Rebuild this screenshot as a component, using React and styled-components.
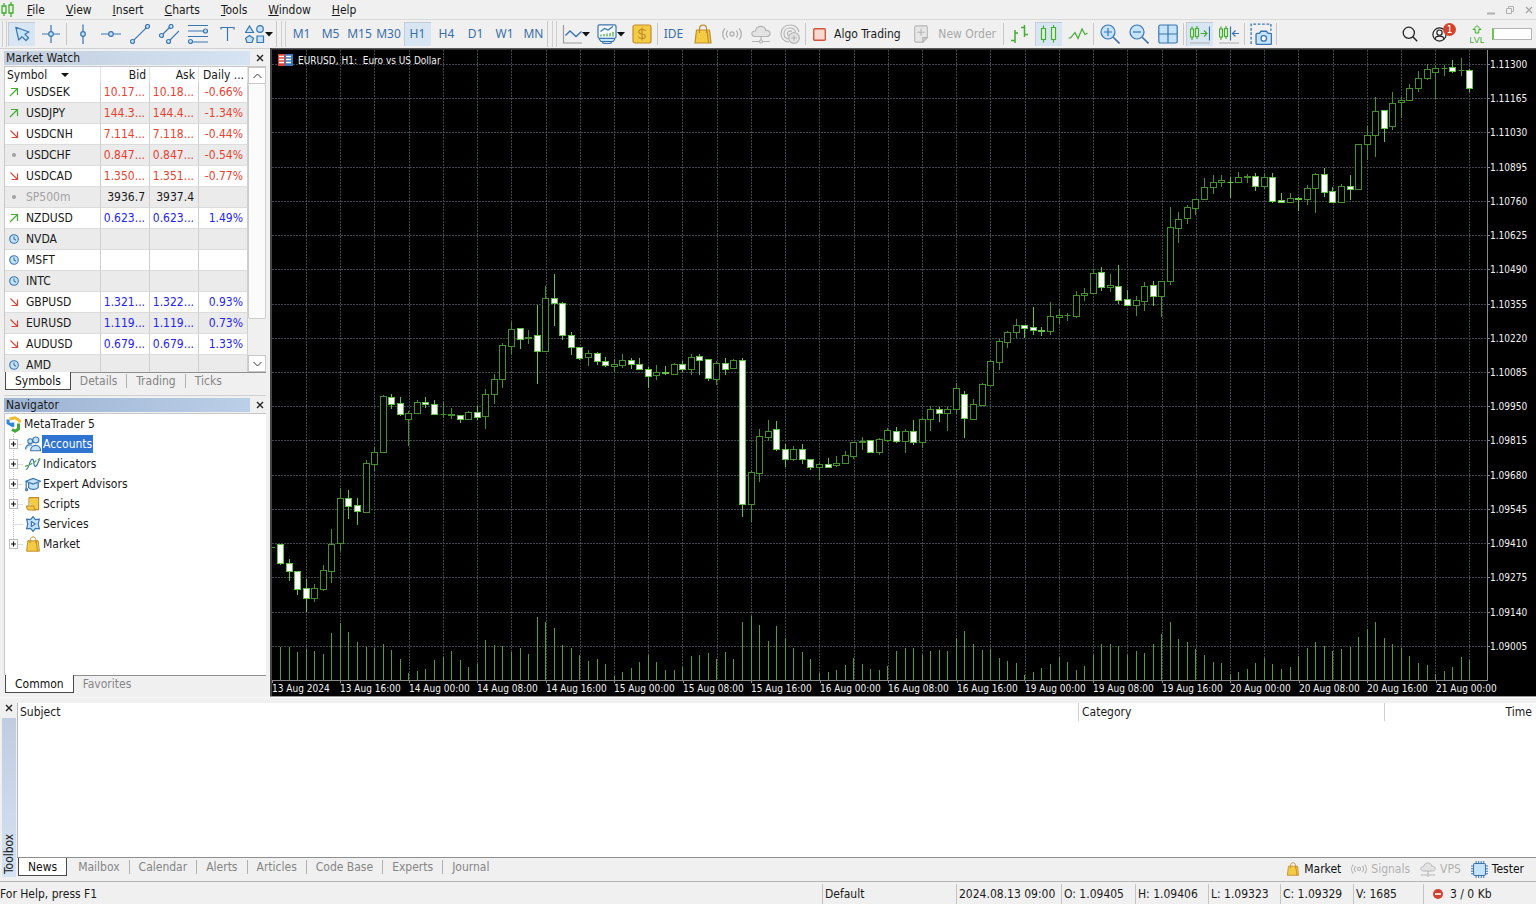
import React from 'react';
import styled, { createGlobalStyle } from 'styled-components';

const UI_FONT = '"DejaVu Sans Condensed", "Noto Sans", sans-serif';
const BLUE = '#3a75b0';
const SKY = '#c5e3fb';
const GREEN = '#45ab33';
const GOLD = '#c08d2c';
const YELLOW = '#f3cb45';
const GRAY = '#b4b4b4';

const GlobalStyle = createGlobalStyle`
  * { box-sizing: border-box; }
  body {
    margin: 0;
    background: #f0f0f0;
    color: #1a1a1a;
    font: 11px/14px ${UI_FONT};
  }
  button {
    padding: 0;
    border: 0;
    background: none;
    color: inherit;
    font: inherit;
    white-space: nowrap;
  }
  svg { display: block; flex: none; }
`;

const Window = styled.div`
  display: flex;
  flex-direction: column;
  height: 100vh;
  overflow: hidden;
`;

/* ---------- menu ---------- */

const MenuBar = styled.nav`
  display: flex;
  align-items: center;
  height: 20px;
  flex: none;
  padding: 0 2px 0 1px;
  border-bottom: 1px solid #d9d9d9;
`;

const MenuItems = styled.div`
  display: flex;
  flex: 1;
  gap: 21px;
  padding-left: 12px;
`;

const MenuItem = styled.button`
  font-size: 12px;
  &::first-letter { text-decoration: underline; }
`;

const WindowButtons = styled.div`
  display: flex;
  gap: 9px;
`;

/* ---------- toolbar ---------- */

const ToolBar = styled.div`
  display: flex;
  align-items: center;
  height: 28px;
  flex: none;
  padding-right: 4px;
`;

const ToolGroup = styled.div`
  display: flex;
  justify-content: space-between;
  flex: none;
  width: ${p => p.$width}px;
`;

const ToolButton = styled.button`
  display: flex;
  align-items: center;
  justify-content: ${p => (p.$menu ? 'flex-start' : 'center')};
  width: ${p => (p.$menu ? 34 : 27)}px;
  height: 24px;
  padding-left: ${p => (p.$menu ? 3 : 0)}px;
  background: ${p => (p.$active ? '#d8e5f2' : 'none')};
  box-shadow: ${p => (p.$active ? 'inset 1px 1px 0 #c3ccd6' : 'none')};
  color: #3a6ea8;
  font: 12px/16px "Noto Sans", sans-serif;
`;

const LabelButton = styled.button`
  display: flex;
  align-items: center;
  gap: 8px;
  height: 24px;
  padding: 0 5px;
  font-size: 12px;
  color: ${p => (p.disabled ? '#a8a8a8' : '#1a1a1a')};
`;

const Separator = styled.div`
  flex: none;
  width: 1px;
  height: 22px;
  margin: 0 2px;
  background: #c8c8c8;
`;

const Grip = styled.div`
  flex: none;
  width: ${p => (p.$first ? 8 : 12)}px;
  height: 26px;
  padding-left: ${p => (p.$first ? 2 : 4)}px;
  border-left: ${p => (p.$first ? 0 : 1)}px solid #c8c8c8;
  &::before {
    content: '';
    display: block;
    width: 3px;
    height: 26px;
    border: solid #cfcfcf;
    border-width: 0 1px;
  }
`;

const ToolBarRight = styled.div`
  display: flex;
  align-items: center;
  gap: 14px;
  margin-left: auto;
`;

const AccountButton = styled.button`
  position: relative;
  width: 24px;
`;

const Badge = styled.span`
  position: absolute;
  top: -4px;
  right: 0;
  width: 13px;
  height: 13px;
  border-radius: 50%;
  background: #d0442c;
  color: #fff;
  font-size: 10px;
  line-height: 13px;
`;

const Level = styled.div`
  display: flex;
  align-items: center;
  gap: 8px;
`;

const LevelMeter = styled.div`
  width: 40px;
  height: 12px;
  border: 1px solid #b5b5b5;
  border-left: 2px solid #6cc653;
  background: #fff;
`;

/* ---------- panels ---------- */

const Workspace = styled.main`
  display: flex;
  flex: 1;
  min-height: 0;
`;

const SideBar = styled.aside`
  display: flex;
  flex-direction: column;
  flex: none;
  width: 270px;
  padding: 0 4px;
  border-top: 1px solid #d0d0d0;
`;

const Panel = styled.section`
  display: flex;
  flex-direction: column;
  flex: ${p => (p.$grow ? '1' : 'none')};
  min-height: 0;
  padding-bottom: ${p => (p.$grow ? 4 : 5)}px;
  border-bottom: ${p => (p.$grow ? 0 : 1)}px solid #d0d0d0;
`;

const PanelHeader = styled.header`
  display: flex;
  align-items: center;
  justify-content: space-between;
  height: 17px;
  padding-right: 1px;
`;

const PanelTitle = styled.h2`
  margin: 0;
  width: 246px;
  padding-left: 2px;
  background: linear-gradient(90deg, ${p => (p.$focused ? '#9bb2d1, #bccfe8' : '#c2cede, #d5e3f2')});
  font-size: 12px;
  font-weight: normal;
  line-height: 14px;
`;

const CloseButton = styled.button`
  width: 10px;
  height: 10px;
`;

const WatchBody = styled.div`
  display: flex;
  height: 306px;
  overflow: hidden;
  border: solid #c8c8c8;
  border-width: 1px 0 0 1px;
  background: #fff;
`;

const WatchTable = styled.table`
  flex: 1;
  align-self: flex-start;
  width: 100%;
  border-collapse: separate;
  border-spacing: 0;
  table-layout: fixed;
  font-size: 12px;
  line-height: 14px;
  th {
    height: 15px;
    padding: 0 3px;
    border-right: 1px solid #e2e2e2;
    font-weight: normal;
    text-align: right;
    white-space: nowrap;
  }
  th:first-child { width: 96px; text-align: left; padding-left: 2px; }
  th:nth-child(2), th:nth-child(3) { width: 49px; }
  td {
    height: 21px;
    padding: 0 4px 0 2px;
    border-right: 1px solid #cfcfcf;
    border-bottom: 1px solid #dcdcdc;
    text-align: right;
    white-space: nowrap;
  }
  td:first-child { padding-left: 4px; }
`;

const WatchRow = styled.tr`
  background: ${p => (p.$odd ? '#ebebeb' : '#fff')};
  color: ${p => p.$tone};
`;

const SymbolCell = styled.div`
  display: flex;
  align-items: center;
  gap: 7px;
  color: ${p => (p.$muted ? '#a3a3a3' : '#1a1a1a')};
`;

const SortMark = styled.span`
  display: inline-block;
  margin-left: 10px;
  vertical-align: 2px;
  border: solid transparent;
  border-width: 4px 4px 0;
  border-top-color: #111;
`;

const ScrollBar = styled.div`
  display: flex;
  flex: none;
  flex-direction: column;
  width: 18px;
  background: #f0f0f0;
`;

const ScrollButton = styled.button`
  display: flex;
  align-items: center;
  justify-content: center;
  height: 17px;
  border: 1px solid #c8c8c8;
  background: #fff;
`;

const ScrollThumb = styled.div`
  height: 235px;
  margin-bottom: auto;
  border: solid #cdcdcd;
  border-width: 0 1px 1px;
  border-radius: 2px;
  background: #fbfbfb;
`;

const Tabs = styled.div`
  display: flex;
  align-items: flex-start;
  height: ${p => (p.$tall ? 24 : 18)}px;
  padding-left: 1px;
  border-top: ${p => (p.$tall ? 1 : 0)}px solid #8f8f8f;
`;

const TabSpace = styled.div`
  flex: 1;
  display: flex;
  padding: ${p => (p.$line ? '1px 0 0' : '2px 0 0 2px')};
  border-top: ${p => (p.$line ? 1 : 0)}px solid #8f8f8f;
`;

const Tab = styled.button`
  height: ${p => (p.$active ? 18 : 14)}px;
  padding: 0 9px;
  border: solid ${p => (p.$active ? '#4a4a4a' : '#b0b0b0')};
  border-width: ${p => (p.$active ? '0 1px 1px' : '0 1px 0 0')};
  background: ${p => (p.$active ? '#fff' : 'none')};
  color: ${p => (p.$active ? '#111' : '#858585')};
  font-size: 12px;
  &:last-child { border-right-width: ${p => (p.$active ? 1 : 0)}px; }
`;

const Tree = styled.ul`
  flex: 1;
  margin: 0;
  padding: 0;
  border: solid #c8c8c8;
  border-width: 1px 0 0 1px;
  background: #fff;
  list-style: none;
  font-size: 12px;
`;

const TreeRow = styled.li`
  display: flex;
  align-items: center;
  gap: 1px;
  height: 20px;
  padding-left: ${p => (p.$root ? 1 : 3)}px;
`;

const TreeLabel = styled.span`
  padding: 2px 1px;
  background: ${p => (p.$selected ? '#2f74d0' : 'none')};
  color: ${p => (p.$selected ? '#fff' : 'inherit')};
`;

const ChartArea = styled.section`
  flex: 1;
  min-width: 0;
  background: #000;
  svg { width: 100%; height: 100%; }
`;

/* ---------- toolbox ---------- */

const ToolBox = styled.section`
  display: flex;
  flex: none;
  height: 184px;
  padding-top: 5px;
  border-top: 1px solid #fafafa;
`;

const ToolBoxRail = styled.div`
  display: flex;
  flex-direction: column;
  align-items: center;
  width: 17px;
  padding-bottom: 4px;
`;

const ToolBoxTitle = styled.h2`
  flex: 1;
  width: 14px;
  margin: 5px 0 0;
  padding-top: 3px;
  background: linear-gradient(0deg, #c0cce0, #d5e3f2);
  font-size: 12px;
  font-weight: normal;
  line-height: 14px;
  writing-mode: vertical-rl;
  transform: rotate(180deg);
`;

const ToolBoxBody = styled.div`
  display: flex;
  flex-direction: column;
  flex: 1;
`;

const NewsPane = styled.div`
  flex: 1;
  border-left: 1px solid #b8b8b8;
  background: #fff;
`;

const NewsTable = styled.table`
  width: 100%;
  border-spacing: 0;
  table-layout: fixed;
  font-size: 12px;
  th {
    height: 18px;
    padding: 0 4px 0 3px;
    border-left: 1px solid #d0d0d0;
    font-weight: normal;
    text-align: left;
  }
  th:first-child { padding-left: 2px; border: 0; }
  th:nth-child(2) { width: 306px; }
  th:last-child { width: 152px; text-align: right; }
`;

const Services = styled.div`
  display: flex;
  gap: 10px;
  margin-left: auto;
  padding-right: 12px;
`;

const Service = styled.button`
  display: flex;
  align-items: center;
  gap: 4px;
  height: 22px;
  color: ${p => (p.disabled ? '#b0b0b0' : '#111')};
  font-size: 12px;
`;

const StatusBar = styled.footer`
  display: flex;
  align-items: center;
  flex: none;
  height: 23px;
  padding-top: 2px;
  border-top: 1px solid #b5b5b5;
  font-size: 12px;
`;

const StatusCell = styled.div`
  display: flex;
  align-items: center;
  gap: 7px;
  flex: ${p => (p.$width ? 'none' : '1')};
  width: ${p => (p.$width ? `${p.$width}px` : 'auto')};
  height: 20px;
  padding-left: ${p => (p.$width ? 2 : 0)}px;
  border-left: ${p => (p.$width ? 1 : 0)}px solid #c4c4c4;
  white-space: nowrap;
`;

/* ---------- icons ---------- */

const Icon = ({ size = 20, color = BLUE, children, ...rest }) => (
  <svg width={size} height={size} viewBox="0 0 20 20" fill="none" stroke={color} strokeWidth="1.2" aria-hidden="true" {...rest}>
    {children}
  </svg>
);

const Caret = () => (
  <svg width="8" height="5" viewBox="0 0 8 5" aria-hidden="true"><path d="M0 0h8L4 4.5z" fill="#111" /></svg>
);

const Cross = ({ color = '#222' }) => (
  <svg width="10" height="10" viewBox="0 0 10 10" stroke={color} strokeWidth="1.4" aria-hidden="true"><path d="M2 2l6 6M8 2l-6 6" /></svg>
);

const Logo = () => (
  <svg width="14" height="18" viewBox="0 0 14 18" fill="none" stroke={GREEN} strokeWidth="1.3" aria-hidden="true">
    <path d="M1 5h4v7H1zM3 2v3M3 12v3M8 4h4v8H8zM10 1v3M10 12v4" fill="#e5f7df" />
  </svg>
);

const CursorIcon = () => <Icon><path d="M3.8 3.2l2.900 12.800 3.300-3.200 4 3.700 2.600-2.500-3.800-3.800 4.200-2.200z" fill={SKY} strokeLinejoin="round" /></Icon>;
const CrosshairIcon = () => <Icon><path d="M10 1v6.5M10 12.500V19M1 10h6.500M12.500 10H19" /><circle cx="10" cy="10" r="2.300" fill={SKY} /></Icon>;
const VLineIcon = () => <Icon><path d="M10 0.500v7M10 12.500V20" /><circle cx="10" cy="10" r="2.300" fill={SKY} /></Icon>;
const HLineIcon = () => <Icon><path d="M0 10h7.500M12.500 10H20" /><circle cx="10" cy="10" r="2.300" fill={SKY} /></Icon>;
const TrendIcon = () => <Icon><path d="M3.800 16.200L16.200 3.800" /><circle cx="2.500" cy="17.500" r="2" fill={SKY} /><circle cx="17.500" cy="2.500" r="2" fill={SKY} /></Icon>;
const ChannelIcon = () => (
  <Icon>
    <path d="M3.500 10.500l7.500-7.500M10.500 16.500L20 7" />
    <circle cx="2.500" cy="11.500" r="2" fill={SKY} /><circle cx="12" cy="2.500" r="2" fill={SKY} /><circle cx="9.500" cy="17.500" r="2" fill={SKY} />
  </Icon>
);
const FiboIcon = () => (
  <Icon>
    <path d="M0 1.500h20M0 7h15M0 12.500h20M5 18h15" />
    <circle cx="17.500" cy="7" r="2" fill={SKY} /><circle cx="2.500" cy="17.500" r="2" fill={SKY} />
  </Icon>
);
const TextIcon = () => <Icon><path d="M4 5.500V3.500h13v2M10.500 3.500V17" /></Icon>;
const ShapesIcon = () => (
  <Icon fill={SKY}>
    <path d="M4.500 2l4 6.500h-8zM4.500 11.500l4 2.800-1.500 4.200H2L.5 14.300z" />
    <circle cx="15" cy="5" r="3.300" /><path d="M12 12h6.500v6.500H12z" />
  </Icon>
);
const LineChartIcon = () => <Icon><path d="M1.500 1v18H20" stroke="#9c9c9c" /><path d="M3.500 11.500L8 7l6 5.500 5.500-5" strokeWidth="1.400" /></Icon>;
const IndicatorsIcon = () => (
  <Icon>
    <rect x="1" y="0.800" width="18" height="13.500" rx="1.500" fill="#f4faff" />
    <path d="M2 15l2 2.500h12l2-2.500M5 18.500c2 1.300 8 1.300 10 0" fill={SKY} />
    <path d="M3.500 7.500l4-3 3.500 1.500 5-3.500" />
    <path d="M4 12.500v-2M7 12.500V10M10 12.500v-3M13 12.500V9M16 12.500V8" stroke={GREEN} />
  </Icon>
);
const DollarIcon = () => (
  <Icon color={GOLD}>
    <rect x="1" y="1" width="18" height="18" rx="2" fill={YELLOW} />
    <path d="M13.500 7c-.5-1.200-2-1.600-3.500-1.600S6.800 6.200 6.800 7.700c0 3.200 6.600 1.400 6.600 4.600 0 1.500-1.600 2.300-3.400 2.300s-3.200-.7-3.700-2M10 3.500v13" />
  </Icon>
);
const BagIcon = ({ size }) => (
  <Icon size={size} color={GOLD}>
    <path d="M3.500 6h13l1.500 13H2z" fill={YELLOW} />
    <path d="M6.500 9V4.500c0-4.500 7-4.500 7 0V9M14 6l1.500 13" />
  </Icon>
);
const SignalIcon = ({ size }) => (
  <Icon size={size} color={GRAY} strokeWidth="1.400">
    <circle cx="10" cy="10" r="2" />
    <path d="M5.800 6.500c-1.800 2-1.800 5 0 7M14.200 6.500c1.800 2 1.800 5 0 7M2.800 4.500c-2.800 3.200-2.800 7.800 0 11M17.200 4.500c2.800 3.200 2.800 7.800 0 11" />
  </Icon>
);
const CloudIcon = ({ size }) => (
  <Icon size={size} color={GRAY}>
    <path d="M5 12.500C-.5 12.500-.3 6.800 4.500 7 5.500 1 14 1 14.800 6.500c5.500-.5 5.700 6 .7 6z" fill="#e3e3e3" />
    <path d="M10 12.500v3.500M1 17.500h7M12 17.500h7" /><circle cx="10" cy="17.500" r="1.500" />
  </Icon>
);
const CopyIcon = () => (
  <Icon color={GRAY}>
    <path d="M9 18C3.500 18 1 14 1 9.800 1 4.500 5 1 10 1c4.500 0 8 2.500 9 7M8.500 15C5.500 14.500 4 12.500 4 9.800 4 6.500 6.500 4 10 4c2.800 0 4.800 1.500 5.600 4M8.500 12C7 10.500 7 8.500 8.500 7.500c1.200-.8 2.500-.6 3.500.3" />
    <circle cx="14" cy="14" r="5.300" fill="#e6e6e6" /><path d="M14 11v6M11 14h6" />
  </Icon>
);
const OrderIcon = () => (
  <Icon size={18} color={GRAY}>
    <path d="M3 2.500Q3 1 4.500 1h11Q17 1 17 2.500V14l-5 5H4.500Q3 19 3 17.500z" fill="#e6e6e6" />
    <path d="M17 14h-5v5z" fill="#cfcfcf" /><path d="M10 4v8M6 8h8" />
  </Icon>
);
const AlgoIcon = () => (
  <svg width="13" height="13" viewBox="0 0 13 13" aria-hidden="true"><rect x="0.700" y="0.700" width="11.600" height="11.600" rx="1" fill="#f8d9d2" stroke="#d4553f" strokeWidth="1.400" /></svg>
);
const BarsIcon = () => <Icon color={GREEN} strokeWidth="1.500"><path d="M5 6v13M1 16.500h4M5 9h3M14.500 1v12M11 3.500h3.500M14.500 10.500H18" /></Icon>;
const CandlesIcon = () => <Icon color={GREEN}><path d="M2.500 4.500h4v11h-4zM4.500 1.500v3M4.500 15.500v3M12.500 3.500h4v12h-4zM14.500 1v2.500M14.500 15.500v3" fill="#ddf3d5" /></Icon>;
const WaveIcon = () => <Icon color={GREEN}><path d="M0.500 14h2l4.500-5.500 3 6L14 5l3 5.500 2.500-1.500" /></Icon>;
const ZoomIcon = ({ plus }) => (
  <Icon>
    <circle cx="8" cy="8" r="7" fill={SKY} />
    <path d={plus ? 'M8 4v8M4 8h8' : 'M4 8h8'} /><path d="M13 13l6.500 6.500" strokeWidth="1.600" />
  </Icon>
);
const TilesIcon = () => <Icon><rect x="0.800" y="1" width="18.400" height="18" rx="1.500" fill={SKY} /><path d="M10 1v18M1 10h18" /></Icon>;
const ShiftIcon = ({ left }) => (
  <Icon>
    <g stroke={GREEN}><path d="M0.500 5h3v8h-3zM2 2.500V5M2 13v3M5.500 4.500h3v8h-3zM7 2v2.500M7 12.500V15" fill="#ddf3d5" /></g>
    {left
      ? <path d="M11.500 2.500v14M20 9.500h-6M16.500 6.500l-3 3 3 3" />
      : <g><path d="M19.500 2.500v14" /><path d="M10.500 9.500h6.500M14 6.500l3 3-3 3" stroke={GREEN} /></g>}
    <path d="M0 19h20" stroke="#b5b5b5" />
  </Icon>
);
const CameraIcon = () => (
  <Icon size={22}>
    <path d="M1 19V1h18v6" strokeDasharray="2.500 1.500" />
    <path d="M5.500 10.500Q5.500 9.500 6.500 9.500h2l1.500-2h5l1.500 2h2q1 0 1 1v8q0 1-1 1h-12q-1 0-1-1z" fill={SKY} />
    <circle cx="12.500" cy="14" r="2.500" fill="#fff" />
  </Icon>
);
const SearchIcon = () => <Icon size={16} color="#222"><circle cx="8.500" cy="8.500" r="7" strokeWidth="1.600" /><path d="M13.500 13.500L19 19" strokeWidth="1.800" /></Icon>;
const UserIcon = () => (
  <Icon size={15} color="#222">
    <circle cx="10" cy="10" r="8.800" strokeWidth="1.600" /><circle cx="10" cy="7.500" r="3.500" strokeWidth="1.600" /><path d="M4 16c1-5 11-5 12 0" strokeWidth="1.600" />
  </Icon>
);
const LevelIcon = () => (
  <svg width="14" height="20" viewBox="0 0 14 20" fill="none" stroke={GREEN} aria-hidden="true">
    <path d="M7 1.500l4 4H8.800V9H5.200V5.500H3z" fill="#dcf4d4" />
    <text x="7" y="19" textAnchor="middle" fontSize="9" fontFamily="Liberation Sans, sans-serif" fill={GREEN} stroke="none">LVL</text>
  </svg>
);
const StatusIcon = () => (
  <svg width="10" height="10" viewBox="0 0 10 10" aria-hidden="true"><circle cx="5" cy="5" r="5" fill="#cf4334" /><path d="M2 5h6" stroke="#fff" strokeWidth="1.600" /></svg>
);
const ChipIcon = () => (
  <Icon size={17}>
    <path d="M6 0v20M9 0v20M12 0v20M15 0v20M0 6h20M0 9h20M0 12h20M0 15h20" />
    <rect x="3" y="3" width="14" height="14" rx="1.500" fill={SKY} />
  </Icon>
);

const MarkIcon = ({ kind }) => {
  if (kind === 'up') {
    return <svg width="10" height="10" viewBox="0 0 10 10" fill="none" stroke={GREEN} strokeWidth="1.200" aria-hidden="true"><path d="M1 9l7.500-7.500M2 1.500h6.500V8" /></svg>;
  }
  if (kind === 'down') {
    return <svg width="10" height="10" viewBox="0 0 10 10" fill="none" stroke="#cf4a3c" strokeWidth="1.200" aria-hidden="true"><path d="M1.500 1.500l7 7M8.500 2.500v6h-6" /></svg>;
  }
  if (kind === 'flat') {
    return <svg width="10" height="10" viewBox="0 0 10 10" aria-hidden="true"><circle cx="5" cy="5" r="2" fill="#a0a0a0" /></svg>;
  }
  return <svg width="10" height="10" viewBox="0 0 10 10" fill="none" stroke={BLUE} strokeWidth="1.100" aria-hidden="true"><circle cx="5" cy="5" r="4.300" fill={SKY} /><path d="M5 2.500V5l2 1.200" /></svg>;
};

const MetaTraderIcon = () => (
  <svg width="16" height="17" viewBox="0 0 16 17" fill="none" strokeWidth="3" strokeLinejoin="round" aria-hidden="true">
    <path d="M3.500 3L9 1.800l4.500 2.700v2" stroke="#f2bd2d" /><path d="M2 3.500v3.500l4.800 2.800V6.500" stroke="#2d86d8" /><path d="M12.500 7.500v5.500L9 15.200 6 13.500" stroke="#43a836" />
  </svg>
);
const AccountsIcon = () => (
  <Icon size={16} strokeWidth="1.400">
    <circle cx="6.500" cy="6.500" r="3" fill={SKY} /><path d="M.8 17c0-8 8-6 8-5" fill={SKY} />
    <circle cx="13.500" cy="5" r="3.800" fill={SKY} /><path d="M7 18.500c0-9 12.500-9 12.500 0z" fill={SKY} />
  </Icon>
);
const IndicatorIcon = () => (
  <Icon size={16} strokeWidth="1.500">
    <path d="M1 17c4 0 5-13 8-13s1 9 4 9 3-8 6-9" /><path d="M0 13l6-2 5-3 8-5" stroke={GREEN} strokeDasharray="4 2" />
  </Icon>
);
const ExpertIcon = () => (
  <Icon size={16} strokeWidth="1.500">
    <path d="M4.500 8.500v6c3 3 9 3 12 0v-6" fill={SKY} /><path d="M1 6.500L10 3l9.500 3.500L10 10z" fill={SKY} /><path d="M1.500 7v8" /><circle cx="2" cy="17" r="1.300" />
  </Icon>
);
const ScriptIcon = () => (
  <Icon size={16} color={GOLD} strokeWidth="1.400">
    <path d="M5 2h12v15H8M5 2v10" fill={YELLOW} /><path d="M2 12.500h9c0 3 1 5 3 5H5c-2.500 0-3-2.500-3-5z" fill={YELLOW} />
  </Icon>
);
const ServiceIcon = () => (
  <Icon size={16} strokeWidth="1.500" strokeLinejoin="round">
    <path d="M10 .8L13 4.500l5-.5-1.500 6 1.500 6-5-.5-3 3.700-3-3.700-5 .5 1.500-6L2 4l5 .5z" fill={SKY} />
    <path d="M8 7l4.800 3L8 13z" fill="#fff" />
  </Icon>
);

/* the dotted branch and the [+] box in front of a tree item */
const Branch = ({ open, last }) => (
  <svg width="16" height="20" viewBox="0 0 16 20" fill="none" stroke="#bdbdbd" aria-hidden="true">
    <path d={`M5.500 0V${last ? 10 : 20}M5.500 10.500H15`} strokeDasharray="1 1" />
    {open && <g><rect x="1.500" y="5.500" width="8" height="9" fill="#fff" /><path d="M3 10h5M5.500 7.500v5" stroke="#111" strokeWidth="1.200" /></g>}
  </svg>
);

/* ---------- chart ---------- */

// high, body top, body bottom, low, filled
const CANDLES = [
  [544, 544, 563, 564, 1], [559, 563, 571, 580, 1], [571, 571, 589, 594, 1], [579, 588, 598, 611, 1],
  [584, 588, 598, 601, 0], [565, 570, 589, 590, 0], [529, 544, 571, 582, 0], [488, 498, 543, 550, 0],
  [490, 498, 506, 518, 1], [498, 505, 511, 524, 1], [460, 463, 512, 512, 0], [447, 452, 464, 470, 0],
  [395, 396, 452, 452, 0], [394, 397, 404, 408, 1], [397, 403, 414, 415, 1], [411, 413, 419, 445, 0],
  [400, 402, 413, 413, 0], [397, 402, 404, 407, 1], [400, 404, 414, 414, 1], [402, 414, 414, 417, 0],
  [408, 414, 415, 418, 0], [415, 415, 419, 422, 1], [411, 412, 419, 419, 0], [406, 412, 417, 419, 1],
  [389, 394, 416, 428, 0], [374, 379, 394, 403, 0], [343, 345, 379, 387, 0], [322, 329, 346, 354, 0],
  [328, 328, 339, 348, 1], [330, 337, 338, 343, 0], [305, 335, 351, 383, 1], [286, 298, 351, 351, 0],
  [274, 298, 303, 325, 1], [302, 303, 335, 339, 1], [332, 335, 347, 354, 1], [347, 347, 358, 359, 1],
  [350, 353, 357, 365, 0], [352, 353, 361, 364, 1], [357, 361, 365, 366, 1], [359, 364, 366, 371, 0],
  [354, 360, 365, 367, 0], [358, 360, 364, 368, 1], [358, 364, 369, 369, 1], [367, 369, 376, 387, 1],
  [365, 372, 375, 379, 0], [366, 372, 373, 374, 1], [363, 364, 374, 374, 0], [361, 364, 369, 371, 1],
  [354, 357, 369, 374, 0], [354, 356, 360, 374, 1], [359, 359, 378, 380, 1], [361, 363, 379, 384, 0],
  [358, 363, 369, 374, 1], [359, 360, 368, 368, 0], [358, 360, 504, 516, 1], [470, 472, 504, 521, 0],
  [429, 436, 473, 481, 0], [420, 431, 437, 440, 0], [421, 429, 449, 450, 1], [444, 449, 459, 466, 1],
  [446, 449, 459, 460, 0], [444, 449, 459, 463, 1], [459, 459, 467, 469, 1], [463, 464, 467, 479, 0],
  [458, 464, 467, 467, 1], [456, 463, 465, 466, 0], [451, 455, 463, 463, 0], [442, 442, 456, 458, 0],
  [437, 441, 442, 449, 0], [440, 440, 452, 452, 1], [438, 439, 452, 454, 0], [428, 430, 440, 441, 0],
  [427, 431, 441, 442, 1], [429, 431, 441, 452, 0], [420, 431, 442, 444, 1], [418, 419, 442, 447, 0],
  [406, 409, 419, 430, 0], [407, 409, 413, 421, 1], [407, 409, 413, 430, 0], [383, 388, 409, 413, 0],
  [391, 394, 418, 437, 1], [399, 404, 419, 419, 0], [383, 384, 405, 405, 0], [360, 361, 385, 385, 0],
  [339, 341, 362, 369, 0], [331, 332, 342, 347, 0], [319, 325, 332, 337, 0], [325, 325, 328, 337, 1],
  [307, 327, 330, 334, 1], [327, 330, 331, 335, 1], [302, 316, 331, 334, 0], [309, 315, 317, 323, 0],
  [313, 315, 315, 320, 0], [291, 295, 316, 317, 0], [288, 293, 295, 300, 0], [269, 273, 293, 293, 0],
  [267, 272, 287, 290, 1], [274, 285, 287, 291, 0], [265, 286, 300, 303, 1], [290, 299, 305, 305, 1],
  [296, 300, 305, 315, 0], [282, 286, 301, 310, 0], [281, 285, 296, 305, 1], [281, 281, 296, 316, 0],
  [207, 227, 281, 284, 0], [212, 219, 228, 242, 0], [205, 207, 218, 223, 0], [199, 199, 208, 214, 0],
  [178, 187, 199, 199, 0], [175, 182, 187, 193, 0], [175, 180, 182, 186, 0], [177, 182, 182, 197, 1],
  [172, 177, 182, 182, 0], [174, 176, 177, 182, 0], [173, 176, 186, 190, 1], [173, 177, 186, 188, 0],
  [173, 177, 201, 202, 1], [193, 200, 202, 202, 1], [193, 198, 202, 202, 0], [197, 198, 199, 210, 1],
  [185, 188, 199, 204, 0], [173, 174, 188, 212, 0], [168, 174, 192, 196, 1], [187, 191, 202, 202, 1],
  [184, 186, 202, 202, 0], [175, 186, 189, 199, 1], [144, 144, 189, 189, 0], [126, 135, 144, 159, 0],
  [97, 111, 135, 156, 0], [110, 110, 128, 141, 1], [92, 103, 126, 129, 0], [97, 100, 102, 117, 0],
  [84, 88, 100, 100, 0], [71, 78, 88, 91, 0], [64, 69, 78, 79, 0], [65, 68, 72, 98, 0],
  [65, 68, 68, 75, 0], [60, 67, 71, 72, 1], [58, 70, 70, 75, 0], [69, 70, 88, 91, 1],
];

const VOLUMES = [
  33, 33, 28, 31, 29, 26, 47, 57, 48, 38, 33, 32, 36, 30, 21, 7, 9, 11, 20, 23, 29, 20, 13, 16, 40, 35, 34, 28,
  32, 26, 63, 58, 52, 35, 32, 25, 19, 21, 16, 4, 8, 12, 18, 25, 18, 10, 10, 13, 24, 25, 27, 21, 28, 21, 58, 64,
  55, 39, 54, 42, 32, 28, 21, 7, 8, 10, 15, 22, 16, 11, 10, 14, 29, 32, 32, 25, 29, 30, 29, 42, 49, 36, 30, 31,
  22, 19, 17, 5, 8, 12, 16, 23, 18, 10, 14, 25, 36, 36, 34, 25, 29, 27, 36, 46, 58, 41, 38, 31, 25, 18, 17, 6,
  8, 11, 17, 22, 16, 11, 13, 24, 32, 38, 34, 29, 31, 33, 43, 51, 58, 42, 36, 32, 24, 17, 15, 6, 9, 13, 23, 20,
];

const DATES = [
  '13 Aug 2024', '13 Aug 16:00', '14 Aug 00:00', '14 Aug 08:00', '14 Aug 16:00', '15 Aug 00:00', '15 Aug 08:00',
  '15 Aug 16:00', '16 Aug 00:00', '16 Aug 08:00', '16 Aug 16:00', '19 Aug 00:00', '19 Aug 08:00', '19 Aug 16:00',
  '20 Aug 00:00', '20 Aug 08:00', '20 Aug 16:00', '21 Aug 00:00',
];

const barX = i => Math.round(280 + i * 8.556) + 0.5;

function Chart() {
  const rows = Array.from({ length: 18 }, (_, i) => ({
    y: Math.round(64 + i * 34.22) + 0.5,
    price: (1.113 - i * 0.00135).toFixed(5),
  }));
  const columns = Array.from({ length: 35 }, (_, i) => Math.round(306 + i * 34.22) + 0.5);

  return (
    <svg viewBox="270 48 1266 649" preserveAspectRatio="xMinYMin meet" role="img" aria-label="EURUSD, H1">
      <g stroke="#3f484d" strokeDasharray="2 1">
        {rows.map(r => <path key={r.y} d={`M272 ${r.y}H1487`} />)}
        {columns.map(x => <path key={x} d={`M${x} 50V680`} />)}
      </g>
      <g stroke="#4f9f37">
        {VOLUMES.map((v, i) => <path key={i} d={`M${barX(i)} ${680 - v}V680`} />)}
      </g>
      <path d="M272 547.500h3" stroke="#4a9a2c" />
      {CANDLES.map(([high, top, bottom, low, filled], i) => {
        const x = barX(i);
        return (
          <g key={i} stroke={filled ? '#62c443' : '#44902b'}>
            <path d={`M${x} ${high}V${low + 1}`} />
            {bottom - top < 1
              ? <path d={`M${x - 3} ${top + 0.5}h6`} />
              : <rect x={x - 3} y={top + 0.5} width="6" height={bottom - top} fill={filled ? '#fff' : '#000'} />}
          </g>
        );
      })}
      <path d="M1487.500 50V680M272 680.500H1488" stroke="#8a8a8a" />
      <g fill="#f2f2f2" fontSize="10">
        {rows.map(r => (
          <g key={r.y}>
            <path d={`M1487 ${r.y}h3`} stroke="#8a8a8a" />
            <text x="1490" y={r.y + 3}>{r.price}</text>
          </g>
        ))}
        {DATES.map((d, i) => {
          const x = Math.round(272 + i * 68.45);
          return (
            <g key={d}>
              <path d={`M${x + 0.5} 680v3`} stroke="#8a8a8a" />
              <text x={x} y="692">{d}</text>
            </g>
          );
        })}
        <text x="298" y="64" xmlSpace="preserve">EURUSD, H1:  Euro vs US Dollar</text>
      </g>
      <rect x="278" y="54" width="7" height="12" fill="#d9483b" />
      <rect x="285" y="54" width="8" height="12" fill="#3a78bd" />
      <path d="M279 56.500h5M279 59.500h5M279 62.500h5M286 56.500h5M286 59.500h5M286 62.500h5" stroke="#fff" strokeWidth="1.500" />
      <path d="M270 48.500H1536" stroke="#5a5a5a" strokeWidth="2" />
      <path d="M271 48V697" stroke="#454545" strokeWidth="2" />
      <path d="M270 696.500H1536" stroke="#9a9a9a" />
    </svg>
  );
}

/* ---------- data ---------- */

const RED = '#e8402f';
const INDIGO = '#2424ee';

const QUOTES = [
  ['up', 'USDSEK', '10.17...', '10.18...', '-0.66%', RED],
  ['up', 'USDJPY', '144.3...', '144.4...', '-1.34%', RED],
  ['down', 'USDCNH', '7.114...', '7.118...', '-0.44%', RED],
  ['flat', 'USDCHF', '0.847...', '0.847...', '-0.54%', RED],
  ['down', 'USDCAD', '1.350...', '1.351...', '-0.77%', RED],
  ['flat', 'SP500m', '3936.7', '3937.4', '', '#1a1a1a'],
  ['up', 'NZDUSD', '0.623...', '0.623...', '1.49%', INDIGO],
  ['clock', 'NVDA', '', '', '', INDIGO],
  ['clock', 'MSFT', '', '', '', INDIGO],
  ['clock', 'INTC', '', '', '', INDIGO],
  ['down', 'GBPUSD', '1.321...', '1.322...', '0.93%', INDIGO],
  ['down', 'EURUSD', '1.119...', '1.119...', '0.73%', INDIGO],
  ['down', 'AUDUSD', '0.679...', '0.679...', '1.33%', INDIGO],
  ['clock', 'AMD', '', '', '', INDIGO],
];

const TREE = [
  { label: 'Accounts', icon: <AccountsIcon />, open: true, selected: true },
  { label: 'Indicators', icon: <IndicatorIcon />, open: true },
  { label: 'Expert Advisors', icon: <ExpertIcon />, open: true },
  { label: 'Scripts', icon: <ScriptIcon />, open: true },
  { label: 'Services', icon: <ServiceIcon /> },
  { label: 'Market', icon: <BagIcon size={16} />, open: true },
];

const TabStrip = ({ tabs, tall, children }) => (
  <Tabs role="tablist" $tall={tall}>
    <Tab role="tab" aria-selected="true" $active>{tabs[0]}</Tab>
    <TabSpace $line={!tall}>
      {tabs.slice(1).map(t => <Tab key={t} role="tab" aria-selected="false">{t}</Tab>)}
    </TabSpace>
    {children}
  </Tabs>
);

function MarketWatch() {
  return (
    <Panel>
      <PanelHeader>
        <PanelTitle>Market Watch</PanelTitle>
        <CloseButton aria-label="Close Market Watch"><Cross /></CloseButton>
      </PanelHeader>
      <WatchBody>
        <WatchTable>
          <thead>
            <tr><th>Symbol <SortMark /></th><th>Bid</th><th>Ask</th><th>Daily ...</th></tr>
          </thead>
          <tbody>
            {QUOTES.map(([mark, symbol, bid, ask, change, tone], i) => (
              <WatchRow key={symbol} $odd={i % 2 === 1} $tone={tone}>
                <td><SymbolCell $muted={symbol === 'SP500m'}><MarkIcon kind={mark} />{symbol}</SymbolCell></td>
                <td>{bid}</td>
                <td>{ask}</td>
                <td>{change}</td>
              </WatchRow>
            ))}
          </tbody>
        </WatchTable>
        <ScrollBar>
          <ScrollButton aria-label="Scroll up">
            <svg width="9" height="6" viewBox="0 0 9 6" fill="none" stroke="#333"><path d="M.5 5l4-4 4 4" /></svg>
          </ScrollButton>
          <ScrollThumb />
          <ScrollButton aria-label="Scroll down">
            <svg width="9" height="6" viewBox="0 0 9 6" fill="none" stroke="#333"><path d="M.5 1l4 4 4-4" /></svg>
          </ScrollButton>
        </ScrollBar>
      </WatchBody>
      <TabStrip tabs={['Symbols', 'Details', 'Trading', 'Ticks']} />
    </Panel>
  );
}

function Navigator() {
  return (
    <Panel $grow>
      <PanelHeader>
        <PanelTitle $focused>Navigator</PanelTitle>
        <CloseButton aria-label="Close Navigator"><Cross /></CloseButton>
      </PanelHeader>
      <Tree>
        <TreeRow $root><MetaTraderIcon /><TreeLabel>MetaTrader 5</TreeLabel></TreeRow>
        {TREE.map((item, i) => (
          <TreeRow key={item.label}>
            <Branch open={item.open} last={i === TREE.length - 1} />
            {item.icon}
            <TreeLabel $selected={item.selected}>{item.label}</TreeLabel>
          </TreeRow>
        ))}
      </Tree>
      <TabStrip tabs={['Common', 'Favorites']} />
    </Panel>
  );
}

function MainToolBar() {
  return (
    <ToolBar role="toolbar">
      <Grip $first />
      <ToolGroup $width={56}>
        <ToolButton aria-label="Cursor" $active><CursorIcon /></ToolButton>
        <ToolButton aria-label="Crosshair"><CrosshairIcon /></ToolButton>
      </ToolGroup>
      <Separator />
      <ToolGroup $width={207}>
        <ToolButton aria-label="Vertical line"><VLineIcon /></ToolButton>
        <ToolButton aria-label="Horizontal line"><HLineIcon /></ToolButton>
        <ToolButton aria-label="Trendline"><TrendIcon /></ToolButton>
        <ToolButton aria-label="Channel"><ChannelIcon /></ToolButton>
        <ToolButton aria-label="Fibonacci"><FiboIcon /></ToolButton>
        <ToolButton aria-label="Text"><TextIcon /></ToolButton>
        <ToolButton aria-label="Shapes" $menu><ShapesIcon /><Caret /></ToolButton>
      </ToolGroup>
      <Grip />
      <ToolGroup $width={259}>
        {['M1', 'M5', 'M15', 'M30', 'H1', 'H4', 'D1', 'W1', 'MN'].map(t => (
          <ToolButton key={t} $active={t === 'H1'}>{t}</ToolButton>
        ))}
      </ToolGroup>
      <Grip />
      <ToolGroup $width={96}>
        <ToolButton aria-label="Chart type" $menu><LineChartIcon /><Caret /></ToolButton>
        <ToolButton aria-label="Indicators" $menu><IndicatorsIcon /><Caret /></ToolButton>
        <ToolButton aria-label="Trade"><DollarIcon /></ToolButton>
      </ToolGroup>
      <Separator />
      <ToolGroup $width={143}>
        <ToolButton>IDE</ToolButton>
        <ToolButton aria-label="Market"><BagIcon /></ToolButton>
        <ToolButton aria-label="Signals"><SignalIcon /></ToolButton>
        <ToolButton aria-label="VPS"><CloudIcon /></ToolButton>
        <ToolButton aria-label="Copy trades"><CopyIcon /></ToolButton>
      </ToolGroup>
      <Separator />
      <ToolGroup $width={193}>
        <LabelButton><AlgoIcon />Algo Trading</LabelButton>
        <LabelButton disabled><OrderIcon />New Order</LabelButton>
      </ToolGroup>
      <Separator />
      <ToolGroup $width={85}>
        <ToolButton aria-label="Bar chart"><BarsIcon /></ToolButton>
        <ToolButton aria-label="Candlesticks" $active><CandlesIcon /></ToolButton>
        <ToolButton aria-label="Line chart"><WaveIcon /></ToolButton>
      </ToolGroup>
      <Separator />
      <ToolGroup $width={85}>
        <ToolButton aria-label="Zoom in"><ZoomIcon plus /></ToolButton>
        <ToolButton aria-label="Zoom out"><ZoomIcon /></ToolButton>
        <ToolButton aria-label="Tile windows"><TilesIcon /></ToolButton>
      </ToolGroup>
      <Separator />
      <ToolGroup $width={56}>
        <ToolButton aria-label="Auto scroll" $active><ShiftIcon /></ToolButton>
        <ToolButton aria-label="Chart shift"><ShiftIcon left /></ToolButton>
      </ToolGroup>
      <Separator />
      <ToolGroup $width={27}>
        <ToolButton aria-label="Screenshot"><CameraIcon /></ToolButton>
      </ToolGroup>
      <Separator />
      <ToolBarRight>
        <button aria-label="Search"><SearchIcon /></button>
        <AccountButton aria-label="Account"><UserIcon /><Badge>1</Badge></AccountButton>
        <Level><LevelIcon /><LevelMeter /></Level>
      </ToolBarRight>
    </ToolBar>
  );
}

function App() {
  return (
    <Window>
      <GlobalStyle />
      <MenuBar>
        <Logo />
        <MenuItems>
          {['File', 'View', 'Insert', 'Charts', 'Tools', 'Window', 'Help'].map(m => <MenuItem key={m}>{m}</MenuItem>)}
        </MenuItems>
        <WindowButtons>
          <button aria-label="Minimize"><svg width="10" height="10" viewBox="0 0 10 10"><path d="M1 8.500h8" stroke="#b0b0b0" strokeWidth="2" /></svg></button>
          <button aria-label="Restore"><svg width="10" height="10" viewBox="0 0 10 10" fill="none" stroke="#b0b0b0"><path d="M1.500 3.500h5v5h-5zM3.500 3V1.500h5v5H7" /></svg></button>
          <button aria-label="Close"><Cross color="#a8a8a8" /></button>
        </WindowButtons>
      </MenuBar>
      <MainToolBar />
      <Workspace>
        <SideBar>
          <MarketWatch />
          <Navigator />
        </SideBar>
        <ChartArea><Chart /></ChartArea>
      </Workspace>
      <ToolBox>
        <ToolBoxRail>
          <CloseButton aria-label="Close Toolbox"><Cross /></CloseButton>
          <ToolBoxTitle>Toolbox</ToolBoxTitle>
        </ToolBoxRail>
        <ToolBoxBody>
          <NewsPane>
            <NewsTable>
              <thead><tr><th>Subject</th><th>Category</th><th>Time</th></tr></thead>
            </NewsTable>
          </NewsPane>
          <TabStrip tall tabs={['News', 'Mailbox', 'Calendar', 'Alerts', 'Articles', 'Code Base', 'Experts', 'Journal']}>
            <Services>
              <Service><BagIcon size={14} />Market</Service>
              <Service disabled><SignalIcon size={16} />Signals</Service>
              <Service disabled><CloudIcon size={16} />VPS</Service>
              <Service><ChipIcon />Tester</Service>
            </Services>
          </TabStrip>
        </ToolBoxBody>
      </ToolBox>
      <StatusBar>
        <StatusCell>For Help, press F1</StatusCell>
        <StatusCell $width={134}>Default</StatusCell>
        <StatusCell $width={105}>2024.08.13 09:00</StatusCell>
        <StatusCell $width={74}>O: 1.09405</StatusCell>
        <StatusCell $width={73}>H: 1.09406</StatusCell>
        <StatusCell $width={72}>L: 1.09323</StatusCell>
        <StatusCell $width={73}>C: 1.09329</StatusCell>
        <StatusCell $width={70}>V: 1685</StatusCell>
        <StatusCell $width={113}><span /><StatusIcon />3 / 0 Kb</StatusCell>
      </StatusBar>
    </Window>
  );
}

export default App;
